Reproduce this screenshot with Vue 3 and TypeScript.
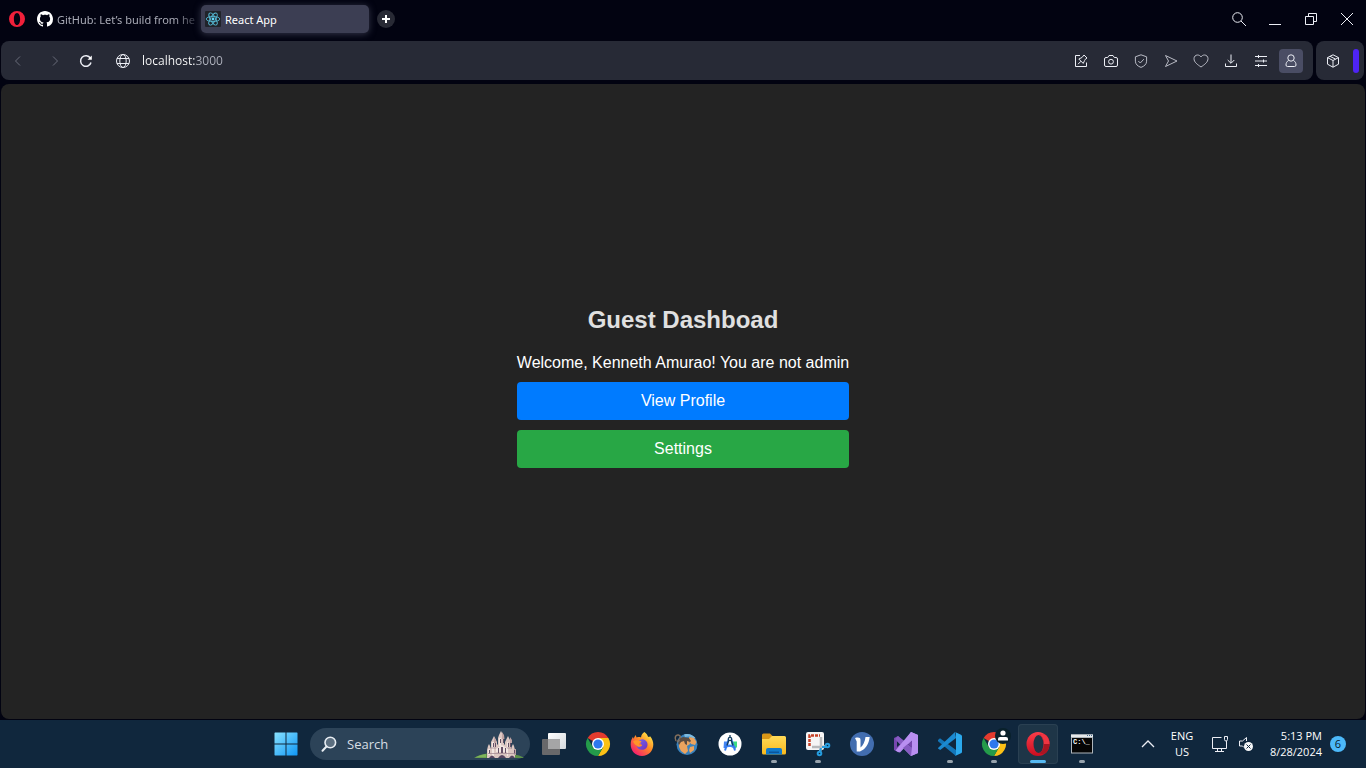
<script setup lang="ts">
import { ref } from 'vue'

interface BarAction {
  name: string
  paths: string[]
  dim?: boolean
}

const address = ref('localhost:3000')
const query = ref('')

const actions: BarAction[] = [
  {
    name: 'Easy setup pinboards',
    paths: ['M7 2.5H2.5v11h11V9.5', 'M9 4.5l2-2.500 3 3-2.500 2M9 4.500L5.800 6l4.400 4.400 1.500-3M8 8.200L5 11.200'],
  },
  {
    name: 'Snapshot',
    paths: ['M1.500 6q0-1.500 1.500-1.500h1.700l1.300-2h4l1.300 2H13q1.500 0 1.500 1.500v6q0 1.500-1.500 1.500H3q-1.500 0-1.500-1.500z', 'M8 6.300a2.400 2.400 0 1 0 0 4.800 2.400 2.400 0 0 0 0-4.800z'],
  },
  {
    name: 'Tracker blocker',
    dim: true,
    paths: ['M8 1.800l5.600 2v4.400c0 3-2.300 5-5.600 6.200-3.300-1.200-5.600-3.200-5.600-6.200V3.800z', 'M5.300 8l2 2 3.500-3.800'],
  },
  { name: 'My Flow', dim: true, paths: ['M2.500 2.500L14 8 2.500 13.500 5.500 8z'] },
  {
    name: 'Add to bookmarks',
    dim: true,
    paths: ['M8 14C4.500 11.600 1 9.200 1 5.700 1 3.500 2.600 2 4.500 2 6 2 7.300 2.800 8 4c.7-1.200 2-2 3.500-2C13.400 2 15 3.500 15 5.700 15 9.200 11.500 11.600 8 14z'],
  },
  { name: 'Downloads', paths: ['M8 1.500V10M4.700 7L8 10.300 11.300 7', 'M2.500 10.500v3h11v-3'] },
  { name: 'Easy setup', paths: ['M2 3.500h12M2 8h12M2 12.500h12', 'M5.500 2v3M10.500 6.500v3M5.500 11v3'] },
]
</script>

<template>
  <div class="desktop">
    <header class="tabs">
      <button class="opera" aria-label="Opera menu">
        <svg viewBox="0 0 16 16" width="16" height="16">
          <path fill="#f0203a" fill-rule="evenodd" d="M8 0a8 8 0 1 0 0 16A8 8 0 0 0 8 0zM8 1.900c2 0 3.100 2.800 3.100 6.100S10 14.100 8 14.100 4.900 11.300 4.900 8 6 1.900 8 1.900z" />
        </svg>
      </button>
      <button class="tab">
        <svg viewBox="0 0 16 16" width="16" height="16" fill="#fff">
          <path d="M8 0C3.580 0 0 3.580 0 8c0 3.540 2.290 6.530 5.470 7.590.4.070.55-.17.55-.38 0-.19-.01-.82-.01-1.490-2.010.37-2.530-.49-2.690-.94-.09-.23-.48-.94-.82-1.130-.28-.15-.68-.52-.01-.53.63-.01 1.080.58 1.230.82.72 1.210 1.870.87 2.330.66.07-.52.28-.87.51-1.070-1.780-.2-3.640-.89-3.640-3.950 0-.87.31-1.590.82-2.150-.08-.2-.36-1.020.08-2.120 0 0 .67-.21 2.200.82.64-.18 1.320-.27 2-.27s1.360.09 2 .27c1.530-1.040 2.200-.82 2.200-.82.44 1.100.16 1.920.08 2.120.51.56.82 1.270.82 2.150 0 3.070-1.870 3.750-3.650 3.950.29.25.54.73.54 1.480 0 1.070-.01 1.930-.01 2.200 0 .21.15.46.55.38A8.010 8.010 0 0 0 16 8c0-4.420-3.580-8-8-8z" />
        </svg>
        <span class="fade">GitHub: Let’s build from he</span>
      </button>
      <button class="tab active">
        <svg viewBox="0 0 16 16" width="16" height="16">
          <rect width="16" height="16" rx="1" fill="#20232a" />
          <g fill="none" stroke="#55b8d3" stroke-width=".9">
            <ellipse cx="8" cy="8" rx="6.800" ry="2.600" />
            <ellipse cx="8" cy="8" rx="6.800" ry="2.600" transform="rotate(60 8 8)" />
            <ellipse cx="8" cy="8" rx="6.800" ry="2.600" transform="rotate(120 8 8)" />
          </g>
          <circle cx="8" cy="8" r="1.400" fill="#61dafb" />
        </svg>
        <span>React App</span>
      </button>
      <button class="plus" aria-label="New tab">
        <svg viewBox="0 0 8 8" width="8" height="8"><path d="M4 0v8M0 4h8" stroke="#fff" stroke-width="2" /></svg>
      </button>
      <div class="window-controls">
        <button aria-label="Search tabs">
          <svg viewBox="0 0 16 16" width="16" height="16"><circle cx="6.500" cy="6.500" r="4.800" /><path d="M10 10l5 5" /></svg>
        </button>
        <button aria-label="Minimize">
          <svg viewBox="0 0 16 16" width="16" height="16"><path d="M2 13.500h12" /></svg>
        </button>
        <button aria-label="Restore">
          <svg viewBox="0 0 16 16" width="16" height="16"><path d="M2.500 5.500h8v8h-8zM5.500 5V2.500h8v8H11" /></svg>
        </button>
        <button aria-label="Close">
          <svg viewBox="0 0 16 16" width="16" height="16"><path d="M2 2l12 12M14 2L2 14" /></svg>
        </button>
      </div>
    </header>

    <div class="bars">
      <nav class="toolbar">
        <button class="nav off" aria-label="Back">
          <svg viewBox="0 0 16 16" width="16" height="16"><path d="M10 3.500L5.500 8l4.500 4.500" /></svg>
        </button>
        <button class="nav off spaced" aria-label="Forward">
          <svg viewBox="0 0 16 16" width="16" height="16"><path d="M6 3.500L10.500 8 6 12.500" /></svg>
        </button>
        <button class="nav reload" aria-label="Reload">
          <svg viewBox="0 0 16 16" width="16" height="16"><path d="M13 9.500A5.300 5.300 0 1 1 12.400 5.200" /><path d="M13.800 2.500v4.300H9.500z" fill="#fff" stroke="none" /></svg>
        </button>
        <button class="nav spaced" aria-label="Site information">
          <svg viewBox="0 0 16 16" width="16" height="16"><circle cx="8" cy="8" r="6.500" /><ellipse cx="8" cy="8" rx="3.200" ry="6.500" /><path d="M2 5.500h12M2 10.500h12" /></svg>
        </button>
        <input v-model="address" class="address" type="text" aria-label="Address" spellcheck="false" />
        <button v-for="a in actions" :key="a.name" class="action" :class="{ dim: a.dim }" :aria-label="a.name">
          <svg viewBox="0 0 16 16" width="16" height="16"><path v-for="d in a.paths" :key="d" :d="d" /></svg>
        </button>
        <button class="action profile" aria-label="Profile">
          <svg viewBox="0 0 16 16" width="16" height="16"><circle cx="8" cy="5" r="3.200" /><path d="M5.500 7.500C3.800 8.500 3 10 3 12q0 1.500 1.500 1.500h7Q13 13.500 13 12c0-2-.8-3.500-2.500-4.500" /></svg>
        </button>
      </nav>
      <aside class="sidecar">
        <button class="action" aria-label="Extensions">
          <svg viewBox="0 0 16 16" width="16" height="16"><path d="M8 1.800l5.500 2.800v6.600L8 14.200l-5.500-3V4.600zM2.500 4.600L8 7.500l5.500-2.900M8 7.500v6.700M5 3.300l5.500 2.800" /></svg>
        </button>
        <button class="aria" aria-label="Aria"></button>
      </aside>
    </div>

    <main class="page">
      <section class="dashboard">
        <h2>Guest Dashboad</h2>
        <p>Welcome, Kenneth Amurao! You are not admin</p>
        <button class="primary">View Profile</button>
        <button class="success">Settings</button>
      </section>
    </main>

    <footer class="taskbar">
      <div class="apps">
        <button class="app" aria-label="Start">
          <svg viewBox="0 0 24 24" width="24" height="24">
            <defs>
              <linearGradient id="win" x1="0" y1="0" x2="24" y2="24" gradientUnits="userSpaceOnUse"><stop stop-color="#8ce4ff" /><stop offset="1" stop-color="#0c94f5" /></linearGradient>
            </defs>
            <path fill="url(#win)" d="M1 .5h10.500V11.500H.5V1zM12.500.5H23l.5.5v10.500h-11zM.5 12.500h11v11H1l-.5-.5zM12.500 12.500h11V23l-.5.5H12.500z" />
          </svg>
        </button>
        <label class="search">
          <svg viewBox="0 0 16 16" width="16" height="16"><circle cx="9.300" cy="6.500" r="5.300" fill="#5c6f80" stroke="#e8eef3" stroke-width="1.600" /><path d="M5.500 10.500L1.500 14.700" stroke="#e8eef3" stroke-width="2" stroke-linecap="round" /></svg>
          <input v-model="query" type="text" placeholder="Search" aria-label="Search" />
          <svg class="castle" viewBox="0 0 50 28" width="50" height="28">
            <path fill="#5c9049" d="M0 28c4-2.500 8-3.800 13-4.500L43 25c3 .5 5 1.500 7 3z" />
            <path fill="#7eb45c" d="M1 27.500c4-2 7-3 11-3.500v3.500z" />
            <path fill="#dcc7c2" d="M13 28V20l1-4 1-2 1 2 1 3v-7l1-2 2-4 2 4 1 2v3l1-1V8l1-3 2-4 2 4 1 3v6l1 1v-3l1-2 2-4 2 4 1 2v7l1-3 1-2 1 2 1 4v8z" />
            <path fill="#f2e6e1" d="M18 12h2v14h-2zM25 8h2v8h-2zM33 12h1v14h-1zM14 19h2v6h-2zM22 19l6-4 6 4v3H22z" />
            <path fill="#bfa3a3" d="M28 2l2 3 .5 4H28zM20 7l2 3v3h-2zM36 7l2 3v3h-2zM40 19h2v6h-2z" />
            <path fill="#655067" d="M19 13h1v4h-1zM21 13h1v4h-1zM26 9h1v4h-1zM29 9h1v4h-1zM34 13h1v4h-1zM36 13h1v4h-1zM24 18h1v5h-1zM27 17h2v6h-2zM31 18h1v5h-1zM15 20h1v4h-1zM40 20h1v4h-1z" />
            <path fill="#54445f" d="M15 28q3-5 6 0zM24 28q4-6 8 0zM35 28q3-5 6 0z" />
            <path stroke="#a68d96" stroke-width=".8" d="M14 23.500h28M17 18h5M33 18h5" />
          </svg>
        </label>
        <button class="app" aria-label="Task view">
          <svg viewBox="0 0 24 24" width="24" height="24">
            <defs><linearGradient id="tv" x1="0" y1="0" x2="1" y2="1"><stop stop-color="#fff" /><stop offset="1" stop-color="#d4d8dc" /></linearGradient></defs>
            <rect x="6" y="1" width="18" height="16" rx="1" fill="url(#tv)" />
            <rect y="7" width="18" height="16" rx="1" fill="#68686a" />
            <path fill="#a5a5a6" d="M6 7h12v10H6z" />
          </svg>
        </button>
        <button class="app" aria-label="Google Chrome">
          <svg viewBox="0 0 24 24" width="24" height="24">
            <path fill="#e33b2e" d="M12 12L1.600 6A12 12 0 0 1 22.400 6z" />
            <path fill="#fbc116" d="M12 12V6h10.400A12 12 0 0 1 12 24l5.200-9z" />
            <path fill="#249b4a" d="M12 24A12 12 0 0 1 1.600 6l5.200 9L12 18l5.200-3z" />
            <circle cx="12" cy="12" r="6" fill="#fff" /><circle cx="12" cy="12" r="4.600" fill="#2d78ee" />
          </svg>
        </button>
        <button class="app" aria-label="Firefox">
          <svg viewBox="0 0 24 24" width="24" height="24">
            <defs>
              <linearGradient id="ff" x1=".85" y1=".1" x2=".2" y2=".9"><stop stop-color="#ffe647" /><stop offset=".45" stop-color="#ff8a25" /><stop offset="1" stop-color="#f5226b" /></linearGradient>
              <linearGradient id="fp" x1="0" y1="0" x2="1" y2="1"><stop stop-color="#7168f2" /><stop offset="1" stop-color="#7130bd" /></linearGradient>
            </defs>
            <path fill="url(#ff)" d="M14.500 0c2 1.500 3 3.100 3.500 4.800 1 .2 1.500.2 2.100-.6 2.300 2.800 3.200 5.500 3.200 8.300C23.300 18.900 18.500 24 12 24 5.500 24 .7 19 .7 12.500.7 9 1.600 7 3 4.800l.5 2L5.500 3l1.200 2.500c1.500-.5 3-.5 4.300-.1C11.200 3 12.500 1.200 14.500 0z" />
            <path fill="url(#fp)" d="M8.200 10c1-2.500 4.500-3.500 7-1.800 3.400 2.200 3 7.200-.5 9-3.600 1.800-7.700-.2-8.100-3.700 1.500 1.400 3.700 1.300 5.500-.1-1.200-1.700-2.300-2.600-3.900-3.400z" />
            <path fill="#ff9528" d="M3 9.500c2.500-2 5.500-1.200 8.500-.2 0 1.200-2.300 1.700-2.500 2.700 0 1 1 1.500 3.100 1.300-1.300 2-4.200 1.800-5.500.2C5.500 12.700 4 12 3 9.500z" />
          </svg>
        </button>
        <button class="app" aria-label="Web tools">
          <svg viewBox="0 0 24 24" width="24" height="24">
            <circle cx="13" cy="12.500" r="10.500" fill="#3a82bd" />
            <path fill="#7cbbe0" d="M10 2.500c5-1.500 9 .5 11.500 3.500L19 6.500l-4-2-4 .5z" />
            <path fill="#eba35e" d="M5 9l4-2 6 1 1 4-3 2 1 5-3 3-4-3-2-4zM15 5l5 1 2.500 4-1.500 3-4-1-2-3zM16 15l4-1v4l-4 3-1-3z" />
            <path fill="none" stroke="#85705c" stroke-width="1.500" d="M2 9C0 5 2 2.500 4.500 3S7 6.500 4.500 8M3 10l4-4" />
            <path fill="#5b4c42" d="M5 7l4-2 6 1 2 3-1 1-3-1v4l-2-1-1-3-3 1-2 3-1-2 2-3z" />
          </svg>
        </button>
        <button class="app" aria-label="Android Studio">
          <svg viewBox="0 0 24 24" width="24" height="24">
            <circle cx="12" cy="12" r="11.500" fill="#fff" />
            <path fill="#3ddc84" d="M13 9.500h6V15l-2 2-3-2z" />
            <path fill="#4285f4" d="M6 9.500h4l-1 6.500H5.500zM7 14c3-2 7-2 11 1l-1 2c-3-2.500-7-2.500-10-1z" />
            <path d="M10.800 7L7 18.500M13.200 7L17 18.500" stroke="#367bef" stroke-width="2" />
            <path d="M11 7.500l-2 6M13 7.500l2 6M12 3v3" stroke="#123d5e" stroke-width="1.300" /><circle cx="12" cy="7" r="1.700" fill="#fff" stroke="#123d5e" stroke-width="1.300" />
          </svg>
        </button>
        <button class="app running" aria-label="File Explorer">
          <svg viewBox="0 0 24 24" width="24" height="24">
            <defs><linearGradient id="fd" x1="0" y1="0" x2="0" y2="1"><stop stop-color="#ffda58" /><stop offset="1" stop-color="#f9b91c" /></linearGradient></defs>
            <path fill="#d99718" d="M0 3q0-1.500 1.500-1.500H8L10.500 4v5H0z" />
            <path fill="url(#fd)" d="M0 7h7l3-3h12.500Q24 4 24 5.500V21q0 1.500-1.500 1.500h-21Q0 22.500 0 21z" />
            <path fill="#117acb" d="M4 22.500V18q0-2 2-2h12q2 0 2 2v4.500z" /><path fill="#0b559b" d="M7 19.500h10v1.500H7z" />
          </svg>
        </button>
        <button class="app running" aria-label="Snipping Tool">
          <svg viewBox="0 0 24 24" width="24" height="24">
            <rect width="18" height="18" rx="2" fill="#f5f5f6" />
            <path fill="none" stroke="#c64026" stroke-width="2.500" stroke-dasharray="3 1" d="M3.500 14V3.500H14" />
            <path stroke="#b8babd" stroke-width="2.500" fill="none" d="M15 5v10l-1 5M6 15h10l4-1" />
            <g fill="none" stroke="#249cdf" stroke-width="2"><circle cx="21.500" cy="13.500" r="1.800" /><circle cx="13.500" cy="21.500" r="1.800" /><path d="M16 15h4M15 16l-1 4" /></g>
          </svg>
        </button>
        <button class="app" aria-label="VSDC">
          <svg viewBox="0 0 24 24" width="24" height="24">
            <circle cx="12" cy="12" r="12" fill="#426daf" />
            <path fill="#fff" d="M5 6c3.500-1 5.500-.5 5.500 2v7.500C13 13.500 15 9.500 15.500 5h4.200C19 12 15 17.500 10 19.500H6.700V9.500z" />
          </svg>
        </button>
        <button class="app" aria-label="Visual Studio">
          <svg viewBox="0 0 24 24" width="24" height="24">
            <path fill="#7646ae" d="M0 6l4-2 14 11.500V8.500L4 20l-4-2V6zm3 3v6l3.500-3z" fill-rule="evenodd" />
            <path fill="#b58bed" d="M17 0l7 3v18l-7 3-7-7 8-1.500V8L6 20.500 3.500 20z" />
            <path fill="#865bc2" d="M4 4l14 11.500V24h-1L1 7z" /><path fill="#b98ff1" d="M17 0l7 3v18l-7 3 1-8.500v-7L4 20l-2.500-1.500z" />
          </svg>
        </button>
        <button class="app running" aria-label="Visual Studio Code">
          <svg viewBox="0 0 24 24" width="24" height="24">
            <path fill="#1376b9" d="M0 8l2-1.700L18 18v6L0 9.200z" />
            <path fill="#1b8ad1" d="M0 16L17 0l1 6L2.200 18 0 16.500z" />
            <path fill="#2ba9ed" d="M17 0l6 2.700q1 .5 1 1.500v15.600q0 1-1 1.500L17 24q1-.5 1-2V2q0-1.500-1-2z" />
          </svg>
        </button>
        <button class="app running" aria-label="Google Chrome profile">
          <svg class="wide" viewBox="0 0 30 28" width="30" height="28">
            <path fill="#e33b2e" d="M12 16L1.600 10a12 12 0 0 1 20.800 0z" />
            <path fill="#fbc116" d="M12 16v-6h10.400A12 12 0 0 1 12 28l5.200-9z" />
            <path fill="#249b4a" d="M12 28A12 12 0 0 1 1.600 10l5.200 9 5.200 3 5.200-3z" />
            <circle cx="12" cy="16" r="6" fill="#fff" /><circle cx="12" cy="16" r="4.600" fill="#2d78ee" />
            <circle cx="21" cy="8" r="8" fill="#09212b" /><circle cx="21" cy="5" r="2.600" fill="#fff" /><path fill="#fff" d="M16 12.500V11q0-2 2-2h6q2 0 2 2v1.500z" />
          </svg>
        </button>
        <button class="app running current" aria-label="Opera">
          <svg viewBox="0 0 24 24" width="24" height="24">
            <defs><linearGradient id="op" x1="0" y1="0" x2="0" y2="1"><stop stop-color="#fb3d49" /><stop offset="1" stop-color="#c90d20" /></linearGradient></defs>
            <ellipse cx="12" cy="12" rx="11.500" ry="12" fill="url(#op)" />
            <path fill="#a91522" d="M13 3c3-2 6-1 7.500.5C23 6 23.700 9 23.500 12.500c-.2 3.500-1.500 6.500-3.500 8.400-2 1.300-5 1.300-7 .1 3-.5 5-4.500 5-9s-2-8.500-5-9z" />
            <path fill="#ef3542" d="M13 3c2-1.700 5-1.200 7 .3 2.300 2 3.500 5 3.500 8.700H18c0-4.700-2-8.500-5-9z" />
            <ellipse cx="12.500" cy="12" rx="5" ry="9" fill="#1e3547" />
          </svg>
        </button>
        <button class="app running" aria-label="Command Prompt">
          <svg viewBox="0 0 24 24" width="24" height="24">
            <path fill="#aeb5bb" d="M1 2.500h22v19H1z" /><path fill="#e5e8ea" d="M1 2.500h22V5H1z" /><path fill="#050505" d="M2 6h20v14.500H2z" />
            <path fill="#41698f" d="M17 3h1v1h-1zM19 3h1v1h-1zM21 3h1v1h-1z" />
            <text x="3" y="12" font-size="7" font-family="Liberation Mono, monospace" font-weight="700" fill="#fff">C:\_</text>
          </svg>
        </button>
      </div>

      <div class="tray">
        <button class="more" aria-label="Show hidden icons">
          <svg viewBox="0 0 14 14" width="14" height="14"><path d="M1 10l6-6 6 6" stroke-width="1.300" /></svg>
        </button>
        <button class="lang">ENG<br />US</button>
        <button class="status" aria-label="Network and volume">
          <svg viewBox="0 0 18 18" width="18" height="18"><path d="M10.500 2.500h-9v11h14V9M4 16.500h9M6.500 14v2.500M10.500 14v2.500M15.500 6v3M13.500 1.500h3v3q0 1.500-1.500 1.500t-1.500-1.500z" /></svg>
          <svg viewBox="0 0 18 18" width="18" height="18"><path d="M9.500 6V2.500L5.500 6h-3v5h3l1.500 1.500" /><circle cx="11.500" cy="11.500" r="4.500" fill="#f5f7f9" stroke="none" /><path stroke="#10263c" d="M9.500 9.500l4 4M13.500 9.500l-4 4" /></svg>
        </button>
        <button class="clock">5:13 PM<br />8/28/2024</button>
        <button class="count" aria-label="6 notifications">6</button>
      </div>
    </footer>
  </div>
</template>

<style>
body {
  background: #020311;
}
</style>

<style scoped>
.desktop {
  display: flex;
  flex-direction: column;
  min-height: 100vh;
  background: #020311;
  color: #fff;
  font-family: "Open Sans", "Noto Sans", sans-serif;
  font-size: 12px;
}
button,
input {
  margin: 0;
  padding: 0;
  border: 0;
  background: none;
  color: inherit;
  font: inherit;
  outline: 0;
}
svg {
  display: block;
  flex: none;
  overflow: visible;
}
.tabs {
  display: flex;
  align-items: center;
  height: 38px;
  margin-bottom: 3px;
  padding: 0 1px;
}
.opera {
  display: grid;
  place-items: center;
  width: 32px;
  height: 28px;
}
.tab {
  display: flex;
  align-items: center;
  gap: 4px;
  width: 168px;
  height: 28px;
  padding: 0 4px;
  border-radius: 5px;
  color: #a9abb6;
  font-family: "Noto Sans", "Open Sans", sans-serif;
  font-size: 11px;
  text-align: left;
  white-space: nowrap;
}
.tab.active {
  background: #3c3e53;
  color: #fff;
  box-shadow: 0 1px 7px #34364a;
}
.fade {
  mask-image: linear-gradient(90deg, #000 85%, transparent 105%);
}
.plus {
  display: grid;
  place-items: center;
  width: 18px;
  height: 18px;
  margin-left: 8px;
  border-radius: 50%;
  background: #282a35;
}
.window-controls {
  display: flex;
  margin-left: auto;
}
.window-controls button {
  display: grid;
  place-items: center;
  width: 36px;
  height: 36px;
}
.window-controls svg,
.toolbar svg,
.sidecar svg,
.tray svg {
  fill: none;
  stroke: #eceef5;
}
.bars {
  display: flex;
  gap: 3px;
  padding: 0 2px 0 1px;
}
.toolbar,
.sidecar {
  display: flex;
  align-items: center;
  height: 39px;
  border-radius: 8px;
  background: #272a36;
}
.toolbar {
  flex: 1;
  padding: 0 10px 0 1px;
}
.nav,
.action {
  display: grid;
  place-items: center;
  width: 31px;
  height: 24px;
}
.spaced {
  margin-left: 6px;
}
.off svg {
  stroke: #696c7a;
}
.reload svg {
  stroke-width: 1.5;
}
.address {
  flex: 1;
  min-width: 0;
  height: 24px;
  margin-left: 4px;
  color: transparent;
  background: linear-gradient(90deg, #fff 53px, #b1b4bf 53px);
  background-clip: text;
}
.action {
  width: 24px;
  margin-left: 6px;
  border-radius: 4px;
}
.dim svg {
  stroke: #b9bbc5;
}
.profile {
  background: #4a4d64;
}
.sidecar {
  gap: 8px;
  padding: 0 5px;
}
.sidecar .action {
  margin-left: 0;
}
.aria {
  width: 6px;
  height: 24px;
  border-radius: 3px;
  background: #4e24f5;
}
.page {
  display: grid;
  flex: 1;
  place-items: center;
  margin: 4px 1px 1px;
  padding-bottom: 30px;
  border-radius: 8px;
  background: #232323;
  font-family: "Liberation Sans", Arial, sans-serif;
  font-size: 16px;
}
.dashboard {
  display: flex;
  flex-direction: column;
  gap: 10px;
  text-align: center;
}
h2 {
  margin: 0 0 10px;
  color: #e0e0e0;
  font-size: 24px;
  line-height: 28px;
}
p {
  margin: 0;
  line-height: 18px;
}
.dashboard button {
  height: 38px;
  border-radius: 4px;
}
.primary {
  background: #007bff;
}
.success {
  background: #28a745;
}
.taskbar {
  display: grid;
  grid-template-columns: 1fr auto 1fr;
  align-items: center;
  height: 48px;
  padding-left: 2px;
  background: #10273d;
}
.apps {
  display: flex;
  grid-column: 2;
  align-items: center;
  gap: 4px;
}
.app {
  position: relative;
  display: grid;
  place-items: center;
  width: 40px;
  height: 40px;
  border-radius: 4px;
}
.app .wide {
  margin: 0 -6px 4px 0;
}
.running::after {
  content: "";
  position: absolute;
  bottom: 1px;
  left: 50%;
  width: 6px;
  height: 3px;
  border-radius: 2px;
  background: #98a3ad;
  transform: translateX(-50%);
}
.current {
  background: #1e3547;
  box-shadow: inset 0 0 0 1px #2a4052;
}
.current::after {
  width: 16px;
  background: #56b9f2;
}
.search {
  display: flex;
  align-items: center;
  gap: 10px;
  width: 220px;
  height: 32px;
  padding: 0 6px 0 11px;
  border-radius: 16px;
  background: #2c4358;
  box-sizing: border-box;
}
.search input {
  flex: 1;
  min-width: 0;
  font-size: 13px;
}
.search input::placeholder {
  color: #d7dee4;
  opacity: 1;
}
.tray {
  display: flex;
  grid-column: 3;
  align-items: center;
  justify-content: flex-end;
  padding-right: 20px;
  font-size: 11px;
  line-height: 16px;
}
.more {
  margin-right: 15px;
}
.lang {
  width: 24px;
  margin-right: 17px;
  text-align: center;
  white-space: nowrap;
}
.status {
  display: flex;
  gap: 8px;
  margin-right: 11px;
}
.clock {
  width: 56px;
  margin-right: 8px;
  text-align: right;
  white-space: nowrap;
}
.count {
  width: 16px;
  height: 16px;
  border-radius: 50%;
  background: #4cb9fa;
  color: #0a1c2c;
  line-height: 16px;
}
</style>
